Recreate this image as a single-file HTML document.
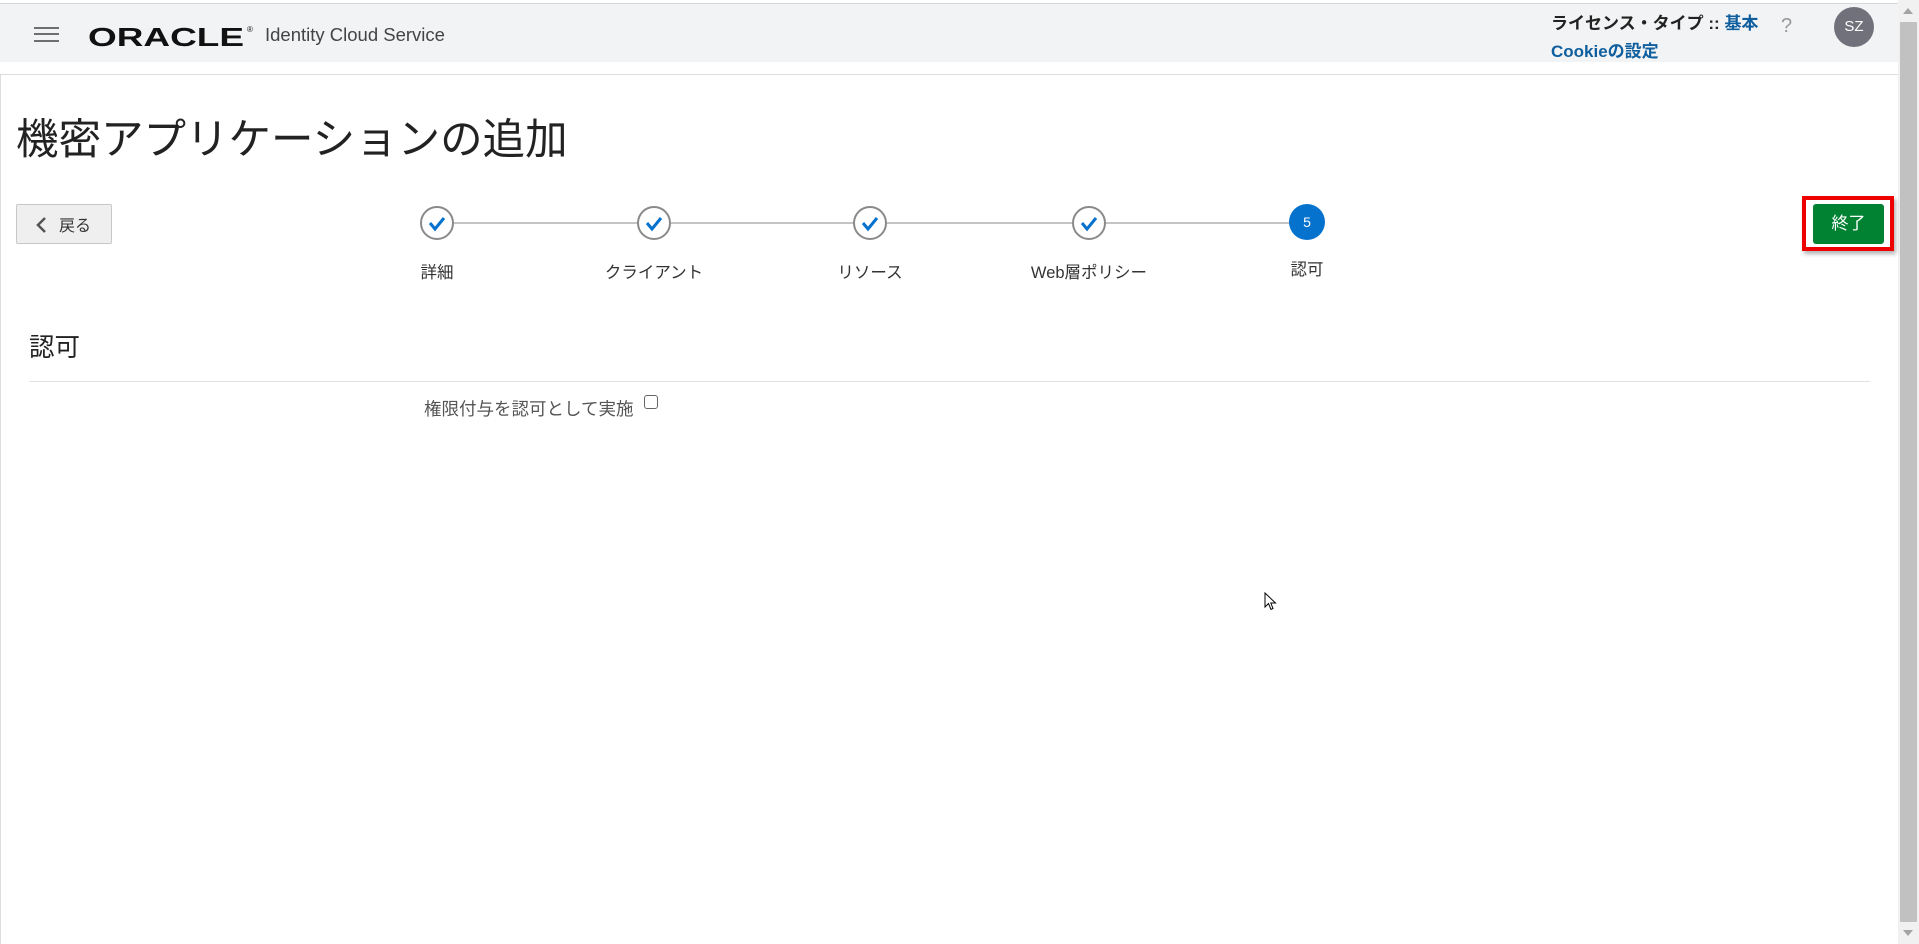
<!DOCTYPE html>
<html><head><meta charset="utf-8">
<style>
*{margin:0;padding:0;box-sizing:border-box}
html,body{width:1919px;height:944px;overflow:hidden;background:#fff;font-family:"Liberation Sans","Noto Sans CJK JP",sans-serif;color:#333}
.abs{position:absolute}
</style></head><body>
<div class="abs" style="left:0;top:0;width:1898px;height:3px;background:#fff"></div>
<div class="abs" style="left:0;top:3px;width:1898px;height:1px;background:#d8d8d8"></div>
<div class="abs" style="left:0;top:4px;width:1898px;height:58px;background:#f2f3f4"></div>
<div class="abs" style="left:34px;top:27px;width:25px;height:2px;background:#6f6f6f"></div>
<div class="abs" style="left:34px;top:33px;width:25px;height:2px;background:#6f6f6f"></div>
<div class="abs" style="left:34px;top:40px;width:25px;height:2px;background:#6f6f6f"></div>
<svg class="abs" style="left:86px;top:22px" width="170" height="28"><text x="2" y="24" font-family="Liberation Sans" font-weight="bold" font-size="26" textLength="156" lengthAdjust="spacingAndGlyphs" fill="#111">ORACLE</text><text x="161" y="10" font-size="8" fill="#111">®</text></svg>
<div class="abs" style="left:265px;top:24px;font-size:18.5px;color:#444">Identity Cloud Service</div>
<div class="abs" style="left:1551px;top:9px;font-size:17px;font-weight:bold;color:#222;white-space:nowrap">ライセンス・タイプ :: <span style="color:#0f5f9f">基本</span></div>
<div class="abs" style="left:1551px;top:37px;font-size:17px;font-weight:bold;color:#0f5f9f">Cookieの設定</div>
<div class="abs" style="left:1781px;top:15px;font-size:20px;color:#999">?</div>
<div class="abs" style="left:1834px;top:7px;width:40px;height:40px;border-radius:50%;background:#70717b;color:#fff;font-size:15px;text-align:center;line-height:40px">SZ</div>
<div class="abs" style="left:1898px;top:0;width:21px;height:944px;background:#f1f1f1"></div>
<div class="abs" style="left:1900px;top:22px;width:17px;height:900px;background:#c1c1c1"></div>
<div class="abs" style="left:1903px;top:8px;width:0;height:0;border-left:5px solid transparent;border-right:5px solid transparent;border-bottom:6px solid #a3a3a3"></div>
<div class="abs" style="left:1903px;top:930px;width:0;height:0;border-left:5px solid transparent;border-right:5px solid transparent;border-top:6px solid #a3a3a3"></div>
<div class="abs" style="left:0;top:74px;width:1898px;height:870px;border-top:1px solid #ddd;border-left:1px solid #ddd"></div>
<div class="abs" style="left:16px;top:106px;font-size:42.5px;color:#222;white-space:nowrap">機密アプリケーションの追加</div>
<div class="abs" style="left:16px;top:204px;width:96px;height:40px;background:#efefef;border:1px solid #c8c8c8;border-radius:2px"></div>
<svg class="abs" style="left:35px;top:216px" width="14" height="18"><path d="M10 2 L3 9 L10 16" stroke="#555" stroke-width="2.5" fill="none"/></svg>
<div class="abs" style="left:59px;top:212px;font-size:16px;color:#333">戻る</div>
<div class="abs" style="left:437px;top:222px;width:870px;height:2px;background:#c4c4c4"></div>
<svg class="abs" style="left:0;top:200px" width="1400" height="50">
<g fill="#fff" stroke="#8a8a8a" stroke-width="2">
<circle cx="437" cy="23" r="16"/><circle cx="654" cy="23" r="16"/><circle cx="870" cy="23" r="16"/><circle cx="1089" cy="23" r="16"/></g>
<g fill="none" stroke="#0572ce" stroke-width="3">
<path d="M430 23 l5 6 l9 -11"/><path d="M647 23 l5 6 l9 -11"/><path d="M863 23 l5 6 l9 -11"/><path d="M1082 23 l5 6 l9 -11"/></g>
<circle cx="1307" cy="22" r="18" fill="#0572ce"/>
<text x="1307" y="27" text-anchor="middle" font-size="14" fill="#fff" font-family="Liberation Sans">5</text>
</svg>
<div class="abs" style="left:397px;top:259px;width:80px;text-align:center;font-size:16.5px;color:#333">詳細</div>
<div class="abs" style="left:584px;top:259px;width:140px;text-align:center;font-size:16.5px;color:#333">クライアント</div>
<div class="abs" style="left:800px;top:259px;width:140px;text-align:center;font-size:16.5px;color:#333">リソース</div>
<div class="abs" style="left:1009px;top:259px;width:160px;text-align:center;font-size:16.5px;color:#333">Web層ポリシー</div>
<div class="abs" style="left:1267px;top:256px;width:80px;text-align:center;font-size:16.5px;color:#333">認可</div>
<div class="abs" style="left:1802px;top:196px;width:92px;height:55px;border:4px solid #ee0000;box-shadow:2px 3px 4px rgba(0,0,0,.3)"></div>
<div class="abs" style="left:1813px;top:204px;width:71px;height:40px;background:#008232;border-radius:3px;color:#fff;font-size:17px;text-align:center;line-height:40px">終了</div>
<div class="abs" style="left:29px;top:327px;font-size:25.5px;color:#222">認可</div>
<div class="abs" style="left:29px;top:381px;width:1841px;height:1px;background:#e2e2e2"></div>
<div class="abs" style="left:424px;top:396px;font-size:17.5px;color:#555;white-space:nowrap">権限付与を認可として実施</div>
<div class="abs" style="left:644px;top:395px;width:14px;height:14px;border:1.5px solid #666;border-radius:3px;background:#fff"></div>
<svg class="abs" style="left:1264px;top:592px" width="14" height="20"><path d="M1 1 L1 15 L4.5 11.5 L7 17.5 L9 16.5 L6.8 11 L11.5 11 Z" fill="#fff" stroke="#000" stroke-width="1"/></svg>
</body></html>
